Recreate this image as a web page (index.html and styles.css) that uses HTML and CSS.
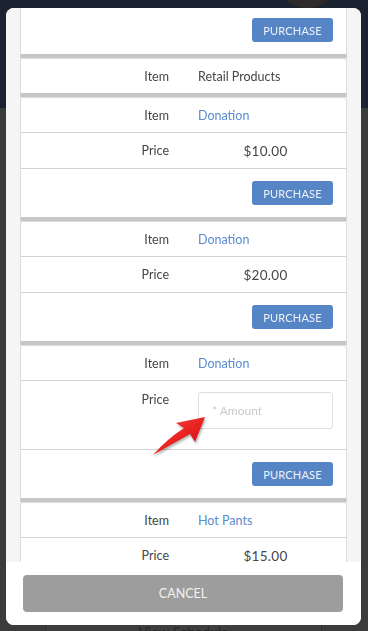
FILE: index.html
```html
<!DOCTYPE html>
<html>
<head>
<meta charset="utf-8">
<link rel="stylesheet" href="styles.css">
</head>
<body>
<div class="page">
  <header class="page-header"><span class="avatar"></span></header>
  <main class="page-body">
    <div class="schedule-btn">View Schedule</div>
  </main>
</div>

<div class="modal">
  <div class="scroll">
    <div class="list">
      <div class="card">
        <div class="row row-action"><button class="btn-purchase">PURCHASE</button></div>
      </div>
      <div class="card">
        <div class="row"><span class="label">Item</span><span class="value">Retail Products</span></div>
      </div>
      <div class="card">
        <div class="row"><span class="label">Item</span><span class="value link">Donation</span></div>
        <div class="row"><span class="label">Price</span><span class="value price">$10.00</span></div>
        <div class="row row-action"><button class="btn-purchase">PURCHASE</button></div>
      </div>
      <div class="card">
        <div class="row"><span class="label">Item</span><span class="value link">Donation</span></div>
        <div class="row"><span class="label">Price</span><span class="value price">$20.00</span></div>
        <div class="row row-action"><button class="btn-purchase">PURCHASE</button></div>
      </div>
      <div class="card">
        <div class="row"><span class="label">Item</span><span class="value link">Donation</span></div>
        <div class="row row-input"><span class="label">Price</span><span class="value"><input class="amount" type="text" placeholder="* Amount"></span></div>
        <div class="row row-action"><button class="btn-purchase">PURCHASE</button></div>
      </div>
      <div class="card card-last">
        <div class="row"><span class="label">Item</span><span class="value link">Hot Pants</span></div>
        <div class="row"><span class="label">Price</span><span class="value price">$15.00</span></div>
      </div>
    </div>
    <svg class="arrow" width="70" height="60" viewBox="0 0 70 60">
      <defs>
        <linearGradient id="ag" x1="0" y1="0" x2="1" y2="1">
          <stop offset="0" stop-color="#ff4a3a"/>
          <stop offset="1" stop-color="#d0000c"/>
        </linearGradient>
      </defs>
      <path d="M60,12 L31,18 L39,23 Q22,34 8,50 Q27,39 45,29 L50,37 Z" fill="url(#ag)"/>
    </svg>
  </div>
  <div class="footer">
    <button class="btn-cancel">CANCEL</button>
  </div>
</div>
</body>
</html>
```

FILE: styles.css
```css
* { box-sizing: border-box; }
html, body { margin: 0; padding: 0; }
body {
  width: 368px;
  height: 631px;
  overflow: hidden;
  font-family: "Lato", "Liberation Sans", sans-serif;
  background: #3b3b3b;
}
.page { display: flex; flex-direction: column; height: 631px; }
.page-header {
  height: 108px;
  background: #1b2330;
  position: relative;
}
.avatar {
  position: absolute;
  left: 280px;
  top: -34px;
  width: 54px;
  height: 42px;
  border-radius: 50%;
  background: #2e2a29;
}
.page-body {
  flex: 1;
  display: flex;
  flex-direction: column;
  justify-content: flex-end;
  padding: 0 46px 0 45px;
}
.schedule-btn {
  height: 24px;
  margin-bottom: -14px;
  background: #3e3e3e;
  border: 1px solid #2f2f2f;
  color: #262626;
  font-size: 14px;
  text-align: center;
  padding-top: 1px;
}

.modal {
  position: fixed;
  left: 6px;
  top: 8px;
  width: 355px;
  height: 617px;
  border-radius: 8px;
  overflow: hidden;
  background: #ffffff;
  display: flex;
  flex-direction: column;
}
.scroll {
  flex: 1;
  overflow: hidden;
  background: #f5f5f5;
  padding: 0 14px 0 14px;
  position: relative;
}
.list {
  margin-top: -2px;
  display: flex;
  flex-direction: column;
}
.card {
  background: #ffffff;
  border: 1px solid #dcdcdc;
  border-bottom: 4px solid #c6c6c6;
  border-radius: 3px 3px 0 0;
}
.card:first-child { border-top: none; }
.card-last { padding-bottom: 20px; }
.row {
  display: flex;
  align-items: center;
  height: 36px;
  border-top: 1px solid #d3d3d3;
  font-size: 12.5px;
  color: #454545;
}
.row:first-child { border-top: none; height: 34px; }
.label {
  width: 148px;
  text-align: right;
}
.value {
  margin-left: 29px;
  width: 135px;
}
.link { color: #5b8bd0; }
.price {
  text-align: center;
  font-size: 13.5px;
  letter-spacing: 0.3px;
}
.row-input {
  height: 69px;
  align-items: flex-start;
  padding-top: 11px;
}
.row-input .label { line-height: 16px; }
.amount {
  display: block;
  width: 135px;
  height: 37px;
  border: 1px solid #dedede;
  border-radius: 3px;
  padding: 0 13px;
  font-family: inherit;
  font-size: 12px;
  color: #444;
  background: #fff;
  outline: none;
}
.amount::placeholder { color: #c9c9c9; }
.row-action {
  height: 49px;
  justify-content: flex-end;
  padding-right: 13px;
}
.row-action:first-child { height: 48px; }
.btn-purchase {
  width: 81px;
  height: 24px;
  border: none;
  border-radius: 3px;
  background: #5585c5;
  color: #eef3fa;
  font-family: inherit;
  font-size: 11px;
  letter-spacing: 0.2px;
  padding: 0;
}
.arrow {
  position: absolute;
  left: 139px;
  top: 397px;
  filter: drop-shadow(1px 2px 1px rgba(0,0,0,0.3));
}
.footer {
  height: 63px;
  background: #ffffff;
  padding: 13px 18px 13px 17px;
}
.btn-cancel {
  width: 100%;
  height: 37px;
  border: none;
  border-radius: 4px;
  background: #9d9d9d;
  color: #f2f2f2;
  font-family: inherit;
  font-size: 12.5px;
  padding: 0;
}
```
